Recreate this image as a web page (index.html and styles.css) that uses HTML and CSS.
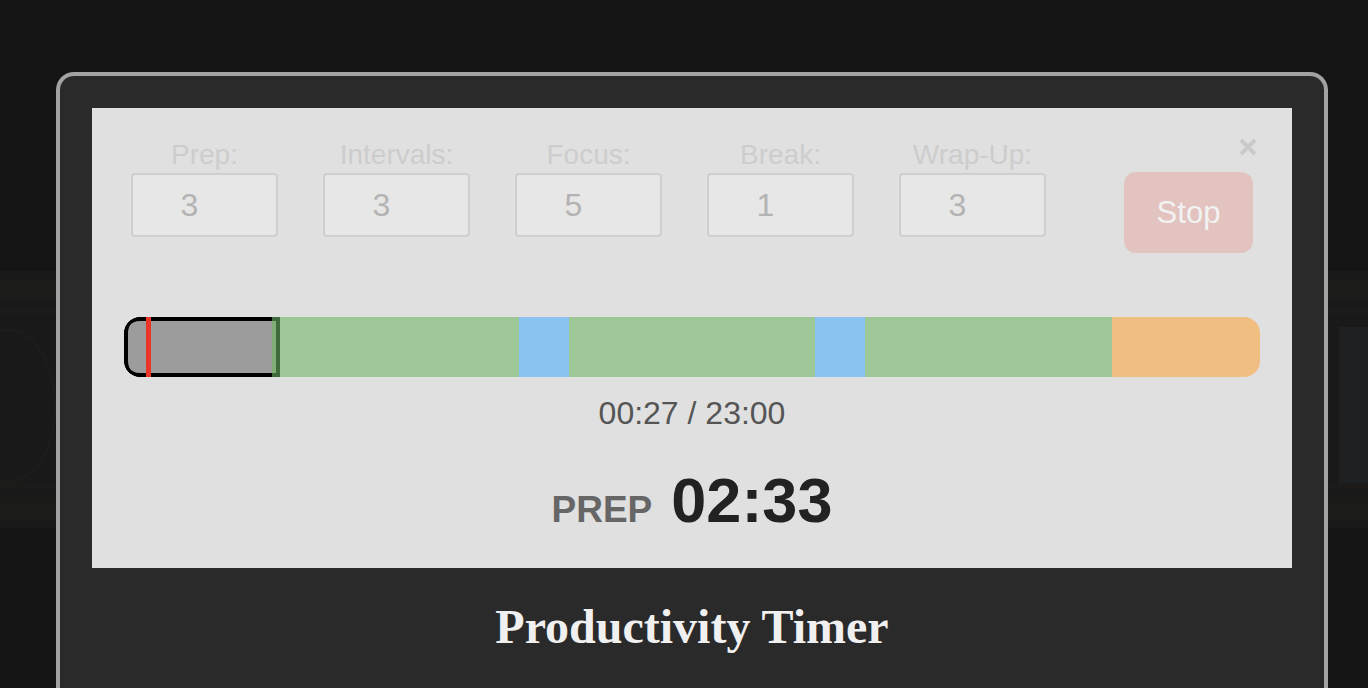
FILE: index.html
```html
<!DOCTYPE html>
<html lang="en">
<head>
<meta charset="utf-8">
<title>Productivity Timer</title>
<link rel="stylesheet" href="styles.css">
</head>
<body>
<div class="backdrop">
  <div class="band">
    <div class="band-line band-line-a"></div>
    <div class="band-line band-line-b"></div>
    <div class="ornament"></div>
    <div class="band-line band-line-c"></div>
    <div class="band-line band-line-d"></div>
  </div>
  <div class="side-card"></div>
</div>
<div class="modal">
  <div class="panel">
    <button class="close" aria-label="Close">
      <svg width="18" height="18" viewBox="0 0 18 18"><path d="M2 2 L16 16 M16 2 L2 16" stroke="#c9c9c9" stroke-width="4" stroke-linecap="butt"/></svg>
    </button>
    <div class="controls">
      <div class="field"><label class="field-label">Prep:</label><input class="field-input" type="text" value="3" disabled></div>
      <div class="field"><label class="field-label">Intervals:</label><input class="field-input" type="text" value="3" disabled></div>
      <div class="field"><label class="field-label">Focus:</label><input class="field-input" type="text" value="5" disabled></div>
      <div class="field"><label class="field-label">Break:</label><input class="field-input" type="text" value="1" disabled></div>
      <div class="field"><label class="field-label">Wrap-Up:</label><input class="field-input" type="text" value="3" disabled></div>
      <button class="stop">Stop</button>
    </div>
    <div class="bar">
      <div class="seg seg-prep" style="flex-grow:3"></div>
      <div class="seg seg-focus seg-next" style="flex-grow:5"><span class="next-mark"><span class="next-inner"></span></span></div>
      <div class="seg seg-break" style="flex-grow:1"></div>
      <div class="seg seg-focus" style="flex-grow:5"></div>
      <div class="seg seg-break" style="flex-grow:1"></div>
      <div class="seg seg-focus" style="flex-grow:5"></div>
      <div class="seg seg-wrap" style="flex-grow:3"></div>
      <div class="marker" style="left:22px"></div>
    </div>
    <div class="elapsed">00:27 / 23:00</div>
    <div class="phase"><span class="phase-name">PREP</span><span class="phase-time">02:33</span></div>
  </div>
  <h1 class="title">Productivity Timer</h1>
</div>
</body>
</html>
```
FILE: styles.css
```css
html, body {
  margin: 0;
  padding: 0;
  width: 1368px;
  height: 688px;
  overflow: hidden;
  background: #141414;
  font-family: "Liberation Sans", Arial, sans-serif;
}

.backdrop {
  position: absolute;
  left: 0;
  top: 0;
  width: 1368px;
  height: 688px;
  z-index: 0;
}

.band {
  position: absolute;
  left: 0;
  top: 271px;
  width: 1368px;
  height: 257px;
  background: #191919;
}

.band-line {
  position: absolute;
  left: 0;
  width: 100%;
}

.band-line-a { top: 8px; height: 22px; background: #1b1b19; }
.band-line-b { top: 38px; height: 4px; background: #1d1c1a; }
.band-line-c { top: 212px; height: 6px; background: #1c1b19; }
.band-line-d { top: 226px; height: 24px; background: #1b1b19; }

.ornament {
  position: absolute;
  left: -40px;
  top: 58px;
  width: 92px;
  height: 150px;
  border: 2px solid #1d1d1c;
  border-radius: 50%;
}

.side-card {
  position: absolute;
  left: 1339px;
  top: 327px;
  width: 40px;
  height: 156px;
  background: #1f2021;
}

.modal {
  position: relative;
  z-index: 1;
  box-sizing: border-box;
  margin: 72px 0 0 56px;
  width: 1272px;
  height: 616px;
  border: 4px solid #a3a3a3;
  border-bottom: 0;
  border-radius: 18px 18px 0 0;
  background: #2a2a2a;
  padding: 32px 32px 0;
}

.panel {
  position: relative;
  background: #e0e0e0;
  padding: 31px 32px 32px;
}

.close {
  position: absolute;
  top: 30px;
  right: 35px;
  width: 18px;
  height: 18px;
  padding: 0;
  margin: 0;
  border: 0;
  background: none;
  display: block;
}

.close svg { display: block; }

.controls {
  display: flex;
  align-items: flex-start;
  gap: 45px;
  padding: 0 7px;
}

.field {
  width: 147px;
  display: flex;
  flex-direction: column;
}

.field-label {
  font-size: 28px;
  line-height: 32px;
  color: #cdcdcd;
  text-align: center;
  margin-bottom: 2px;
}

.field-input {
  box-sizing: border-box;
  width: 147px;
  height: 64px;
  margin: 0;
  border: 2px solid #cfcfcf;
  border-radius: 4px;
  background: #e7e7e7;
  color: #b3b3b3;
  font-family: "Liberation Sans", Arial, sans-serif;
  font-size: 32px;
  text-align: center;
  padding: 0 30px 0 0;
  -webkit-text-fill-color: #b3b3b3;
  opacity: 1;
}

.stop {
  margin: 33px 0 0 auto;
  width: 129px;
  height: 81px;
  border: 0;
  border-radius: 12px;
  background: #e2c3bf;
  color: #f2f2f2;
  font-family: "Liberation Sans", Arial, sans-serif;
  font-size: 31px;
  padding: 0;
}

.bar {
  position: relative;
  display: flex;
  height: 60px;
  margin-top: 64px;
  border-radius: 16px;
  overflow: hidden;
}

.seg {
  flex-basis: 0;
  flex-shrink: 1;
  min-width: 0;
  height: 60px;
}

.seg-prep {
  background: #9c9c9c;
  border-radius: 16px 0 0 16px;
  box-shadow: inset 4px 0 0 #000, inset 0 4px 0 #000, inset 0 -4px 0 #000;
}

.seg-focus { background: #9dc797; }
.seg-break { background: #8cc2f0; }
.seg-wrap { background: #f0be80; }

.seg-next { position: relative; }

.next-mark {
  position: absolute;
  left: 0;
  top: 0;
  width: 8px;
  height: 60px;
  background: #3e6a3c;
}

.next-inner {
  position: absolute;
  left: 0;
  top: 4px;
  width: 4px;
  height: 52px;
  background: #7eae76;
}

.marker {
  position: absolute;
  top: 0;
  width: 5px;
  height: 60px;
  background: #ea3527;
}

.elapsed {
  margin-top: 18px;
  font-size: 32px;
  line-height: 36px;
  color: #555555;
  text-align: center;
}

.phase {
  margin-top: 33px;
  height: 72px;
  display: flex;
  justify-content: center;
  align-items: baseline;
  gap: 19px;
  line-height: 72px;
  font-weight: bold;
}

.phase-name {
  font-size: 37px;
  color: #666666;
}

.phase-time {
  font-size: 63px;
  color: #222222;
}

.title {
  margin: 32px 0 0;
  font-family: "Liberation Serif", "Times New Roman", serif;
  font-size: 48px;
  line-height: 53px;
  font-weight: bold;
  color: #f0f0f0;
  text-align: center;
}
```
